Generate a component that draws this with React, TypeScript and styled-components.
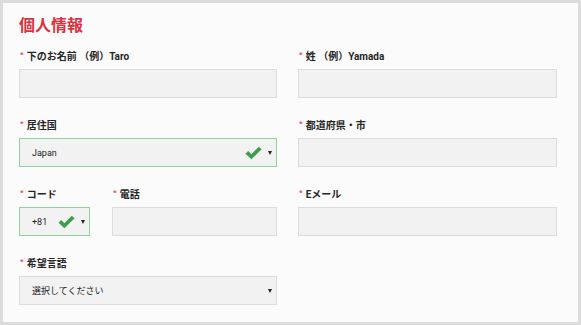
import React from "react";
import styled, { createGlobalStyle } from "styled-components";

const Global = createGlobalStyle`
  html, body { margin: 0; padding: 0; background: #dcdcdc; }
  body { font-family: Roboto, "Liberation Sans", "Noto Sans CJK JP", sans-serif; }
  * { box-sizing: border-box; }
`;

const Page = styled.div`
  width: 581px;
  height: 325px;
  padding: 3px;
  background: #dcdcdc;
`;

const Panel = styled.div`
  width: 575px;
  height: 319px;
  background: #fbfbfb;
  padding: 11px 21px 0 16px;
`;

const Title = styled.h2`
  margin: 0;
  font-size: 16px;
  line-height: 20px;
  font-weight: 700;
  color: #d8323e;
  font-family: "Noto Sans CJK JP", sans-serif;
`;

const Grid = styled.div`
  margin-top: 14px;
  display: grid;
  grid-template-columns: 258px 259px;
  column-gap: 21px;
  row-gap: 19px;
`;

const Split = styled.div`
  display: grid;
  grid-template-columns: 71px 165px;
  column-gap: 22px;
`;

const Field = styled.div`
  display: flex;
  flex-direction: column;
  gap: 7px;
`;

const Label = styled.label`
  display: flex;
  align-items: center;
  height: 14px;
  font-size: 10px;
  font-weight: 700;
  color: #262626;
  font-family: Roboto, "Noto Sans CJK JP", sans-serif;
  white-space: nowrap;
`;

const Star = styled.span`
  color: #e2515b;
  font-size: 8px;
  margin: 0 3px 0 1px;
  position: relative;
  top: -1px;
`;

const Input = styled.div<{ $valid?: boolean }>`
  height: 29px;
  background: #f2f2f2;
  border: 1px solid ${(p) => (p.$valid ? "#8fd39c" : "#dcdcdc")};
  display: flex;
  align-items: center;
  padding: 0 4px 0 12px;
  font-size: 9px;
  color: #222;
  font-family: Roboto, "Noto Sans CJK JP", sans-serif;
`;

const Value = styled.span`
  flex: 1;
`;

const Arrow = styled.span`
  width: 0;
  height: 0;
  border-left: 2.5px solid transparent;
  border-right: 2.5px solid transparent;
  border-top: 4px solid #222;
  margin-left: 6px;
`;

const Check = () => (
  <svg width="17" height="14" viewBox="0 0 16 13">
    <path d="M0.5 7.2 L3 4.7 L6 7.7 L13 0.5 L15.6 3 L6 12.4 Z" fill="#3f9e4c" />
  </svg>
);

const Req = ({ children }: { children: React.ReactNode }) => (
  <Label>
    <Star>*</Star>
    {children}
  </Label>
);

export default function App() {
  return (
    <Page>
      <Global />
      <Panel>
        <Title>個人情報</Title>
        <Grid>
          <Field>
            <Req>下のお名前 （例）Taro</Req>
            <Input />
          </Field>
          <Field>
            <Req>姓 （例）Yamada</Req>
            <Input />
          </Field>
          <Field>
            <Req>居住国</Req>
            <Input $valid>
              <Value>Japan</Value>
              <Check />
              <Arrow />
            </Input>
          </Field>
          <Field>
            <Req>都道府県・市</Req>
            <Input />
          </Field>
          <Split>
            <Field>
              <Req>コード</Req>
              <Input $valid>
                <Value>+81</Value>
                <Check />
                <Arrow />
              </Input>
            </Field>
            <Field>
              <Req>電話</Req>
              <Input />
            </Field>
          </Split>
          <Field>
            <Req>Eメール</Req>
            <Input />
          </Field>
          <Field>
            <Req>希望言語</Req>
            <Input>
              <Value>選択してください</Value>
              <Arrow />
            </Input>
          </Field>
        </Grid>
      </Panel>
    </Page>
  );
}
